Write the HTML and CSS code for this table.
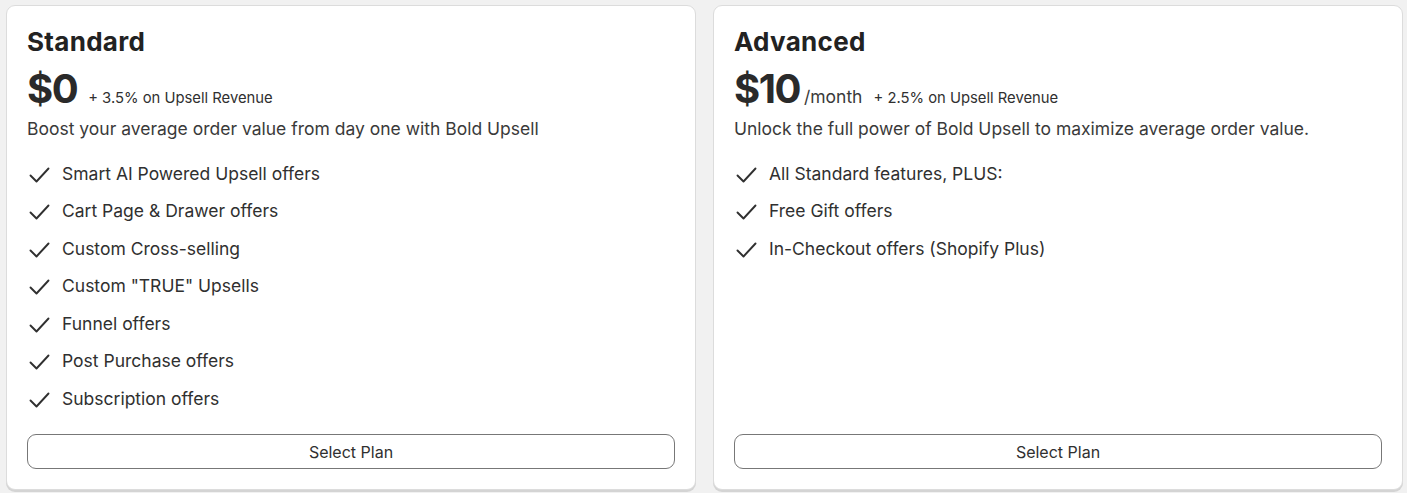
FILE: index.html
```html
<!DOCTYPE html>
<html lang="en">
<head>
<meta charset="utf-8">
<title>Plans</title>
<link rel="stylesheet" href="styles.css">
</head>
<body>
<div class="plans">
  <section class="card">
    <h2 class="title">Standard</h2>
    <div class="price-row">
      <span class="price">$0</span>
      <span class="extra">+ 3.5% on Upsell Revenue</span>
    </div>
    <p class="desc">Boost your average order value from day one with Bold Upsell</p>
    <ul class="features">
      <li><svg class="check" viewBox="0 0 22 22"><path d="M2.5 12.5 L8.5 18.5 L20.5 5.5"/></svg>Smart AI Powered Upsell offers</li>
      <li><svg class="check" viewBox="0 0 22 22"><path d="M2.5 12.5 L8.5 18.5 L20.5 5.5"/></svg>Cart Page &amp; Drawer offers</li>
      <li><svg class="check" viewBox="0 0 22 22"><path d="M2.5 12.5 L8.5 18.5 L20.5 5.5"/></svg>Custom Cross-selling</li>
      <li><svg class="check" viewBox="0 0 22 22"><path d="M2.5 12.5 L8.5 18.5 L20.5 5.5"/></svg>Custom "TRUE" Upsells</li>
      <li><svg class="check" viewBox="0 0 22 22"><path d="M2.5 12.5 L8.5 18.5 L20.5 5.5"/></svg>Funnel offers</li>
      <li><svg class="check" viewBox="0 0 22 22"><path d="M2.5 12.5 L8.5 18.5 L20.5 5.5"/></svg>Post Purchase offers</li>
      <li><svg class="check" viewBox="0 0 22 22"><path d="M2.5 12.5 L8.5 18.5 L20.5 5.5"/></svg>Subscription offers</li>
    </ul>
    <button class="select">Select Plan</button>
  </section>
  <section class="card">
    <h2 class="title">Advanced</h2>
    <div class="price-row">
      <span class="price">$10</span>
      <span class="period">/month</span>
      <span class="extra">+ 2.5% on Upsell Revenue</span>
    </div>
    <p class="desc">Unlock the full power of Bold Upsell to maximize average order value.</p>
    <ul class="features">
      <li><svg class="check" viewBox="0 0 22 22"><path d="M2.5 12.5 L8.5 18.5 L20.5 5.5"/></svg>All Standard features, PLUS:</li>
      <li><svg class="check" viewBox="0 0 22 22"><path d="M2.5 12.5 L8.5 18.5 L20.5 5.5"/></svg>Free Gift offers</li>
      <li><svg class="check" viewBox="0 0 22 22"><path d="M2.5 12.5 L8.5 18.5 L20.5 5.5"/></svg>In-Checkout offers (Shopify Plus)</li>
    </ul>
    <button class="select">Select Plan</button>
  </section>
</div>
</body>
</html>
```

FILE: styles.css
```css
html, body {
  margin: 0;
  padding: 0;
  background: #f1f1f1;
  font-family: "Inter", "Liberation Sans", sans-serif;
  color: #303030;
}

.plans {
  display: flex;
  gap: 17px;
  padding: 5px 4px 3px 6px;
  height: 493px;
  box-sizing: border-box;
}

.card {
  flex: 1;
  display: flex;
  flex-direction: column;
  background: #ffffff;
  border: 1px solid #dcdcdc;
  border-radius: 9px;
  box-shadow: 0 2px 0 #d4d4d4;
  padding: 20px;
  box-sizing: border-box;
  min-width: 0;
}

.title {
  margin: 0;
  font-size: 26px;
  line-height: 32px;
  font-weight: 700;
  letter-spacing: 0.3px;
  color: #222222;
}

.price-row {
  display: flex;
  align-items: baseline;
  margin-top: 7px;
}

.price {
  font-size: 40px;
  line-height: 48px;
  font-weight: 700;
  letter-spacing: -1.5px;
  color: #2a2a2a;
}

.period {
  font-size: 17.5px;
  margin-left: 4px;
  color: #3a3a3a;
}

.extra {
  font-size: 14.8px;
  margin-left: 11px;
  color: #303030;
}

.desc {
  margin: 4px 0 0;
  font-size: 17.5px;
  line-height: 24px;
  color: #3a3a3a;
}

.features {
  list-style: none;
  margin: 14px 0 0;
  padding: 0;
}

.features li {
  display: flex;
  align-items: center;
  font-size: 17.5px;
  line-height: 24px;
  padding: 6.75px 0;
  color: #303030;
}

.check {
  width: 22px;
  height: 22px;
  margin-left: 1px;
  margin-right: 12px;
  flex: none;
  fill: none;
  stroke: #303030;
  stroke-width: 1.9;
  stroke-linecap: round;
  stroke-linejoin: round;
}

.select {
  margin-top: auto;
  height: 35px;
  width: 100%;
  background: #ffffff;
  border: 1px solid #777777;
  border-radius: 9px;
  font-family: inherit;
  font-size: 16px;
  color: #303030;
  cursor: pointer;
}
```
